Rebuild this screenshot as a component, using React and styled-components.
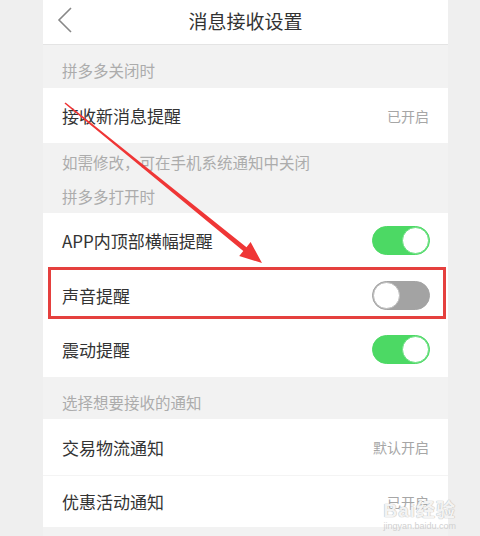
import React from 'react';
import styled, { createGlobalStyle } from 'styled-components';

const GlobalStyle = createGlobalStyle`
  html, body {
    margin: 0;
    padding: 0;
    background: #efefef;
  }
  body {
    font-family: "Noto Sans CJK SC", "Noto Sans", sans-serif;
  }
`;

const Page = styled.div`
  position: relative;
  width: 480px;
  height: 536px;
  overflow: hidden;
`;

const Phone = styled.div`
  margin-left: 43px;
  width: 405px;
  background: #f2f2f2;
  min-height: 536px;
`;

const Header = styled.header`
  position: relative;
  height: 44px;
  background: #fff;
  border-bottom: 1px solid #e4e4e4;
  display: flex;
  align-items: center;
  justify-content: center;
`;

const Back = styled.svg`
  position: absolute;
  left: 14px;
  top: 7px;
`;

const Title = styled.h1`
  margin: 0;
  font-size: 19px;
  font-weight: 400;
  color: #333;
  line-height: 1;
  transform: translateY(-2px);
`;

const Group = styled.div`
  padding: ${(p) => p.$top}px 19px ${(p) => p.$bottom}px;
`;

const Caption = styled.div`
  font-size: 15.5px;
  line-height: ${(p) => p.$lh || 34}px;
  color: #acacac;
  white-space: nowrap;
`;

const Row = styled.div`
  position: relative;
  display: flex;
  align-items: center;
  justify-content: space-between;
  height: ${(p) => p.$h || 55}px;
  padding: 0 18px 0 19px;
  background: #fff;
  border-top: ${(p) => (p.$line ? '1px solid #f4f4f4' : 'none')};
  box-sizing: border-box;

  ${(p) =>
    p.$marked &&
    `
    &::after {
      content: '';
      position: absolute;
      left: 5px;
      right: 2px;
      top: -1px;
      bottom: 3px;
      border: 3px solid #e5403e;
      pointer-events: none;
    }
  `}
`;

const Label = styled.span`
  font-size: 17px;
  color: #333;
`;

const Value = styled.span`
  font-size: 14px;
  color: #a6a6a6;
  margin-right: 1px;
`;

const Track = styled.div`
  position: relative;
  width: 58px;
  height: 29px;
  border-radius: 15px;
  box-sizing: border-box;
  background: ${(p) => (p.$on ? '#4cd964' : '#a3a3a3')};
  border: 1px solid ${(p) => (p.$on ? '#4cd964' : '#a3a3a3')};
`;

const Knob = styled.div`
  position: absolute;
  top: 0;
  ${(p) => (p.$on ? 'right: 0;' : 'left: 0;')}
  width: 27px;
  height: 27px;
  border-radius: 50%;
  background: #fff;
  box-sizing: border-box;
  border: 1px solid ${(p) => (p.$on ? '#6fe085' : '#bdbdbd')};
`;

const Arrow = styled.svg`
  position: absolute;
  left: 0;
  top: 0;
  pointer-events: none;
`;

const Watermark = styled.div`
  position: absolute;
  right: 24px;
  bottom: 4px;
  display: flex;
  flex-direction: column;
  align-items: center;
  color: rgba(255, 255, 255, 0.85);
  text-shadow: 0 0 1px #b8b8b8, 0 0 1px #b8b8b8;
  pointer-events: none;
  font-family: "Liberation Sans", "Noto Sans CJK SC", sans-serif;
`;

const Mark = styled.div`
  font-size: 19px;
  font-weight: 700;
  letter-spacing: 1px;
  line-height: 20px;
`;

const Site = styled.div`
  font-size: 9px;
  line-height: 11px;
  color: #d0d0d0;
  text-shadow: none;
`;

function Toggle({ on }) {
  return (
    <Track $on={on}>
      <Knob $on={on} />
    </Track>
  );
}

export default function App() {
  return (
    <Page>
      <GlobalStyle />
      <Phone>
        <Header>
          <Back width="16" height="26" viewBox="0 0 16 26">
            <path d="M14 1 L2 13 L14 25" fill="none" stroke="#888" strokeWidth="1.6" />
          </Back>
          <Title>消息接收设置</Title>
        </Header>

        <Group $top={8} $bottom={1}>
          <Caption>拼多多关闭时</Caption>
        </Group>
        <Row>
          <Label>接收新消息提醒</Label>
          <Value>已开启</Value>
        </Row>

        <Group $top={2} $bottom={0}>
          <Caption>如需修改，可在手机系统通知中关闭</Caption>
          <Caption>拼多多打开时</Caption>
        </Group>
        <Row>
          <Label>APP内顶部横幅提醒</Label>
          <Toggle on />
        </Row>
        <Row $h={54} $marked>
          <Label>声音提醒</Label>
          <Toggle on={false} />
        </Row>
        <Row>
          <Label>震动提醒</Label>
          <Toggle on />
        </Row>

        <Group $top={9} $bottom={0}>
          <Caption $lh={33}>选择想要接收的通知</Caption>
        </Group>
        <Row $h={56}>
          <Label>交易物流通知</Label>
          <Value>默认开启</Value>
        </Row>
        <Row $h={52} $line>
          <Label>优惠活动通知</Label>
          <Value>已开启</Value>
        </Row>
      </Phone>

      <Arrow width="480" height="536" viewBox="0 0 480 536">
        <polygon
          points="64.5,103.6 65.5,102.4 246.5,247.2 250.6,242.1 262,263 239.2,256.1 243.3,251"
          fill="#ef3636"
        />
      </Arrow>

      <Watermark>
        <Mark>Bai经验</Mark>
        <Site>jingyan.baidu.com</Site>
      </Watermark>
    </Page>
  );
}
